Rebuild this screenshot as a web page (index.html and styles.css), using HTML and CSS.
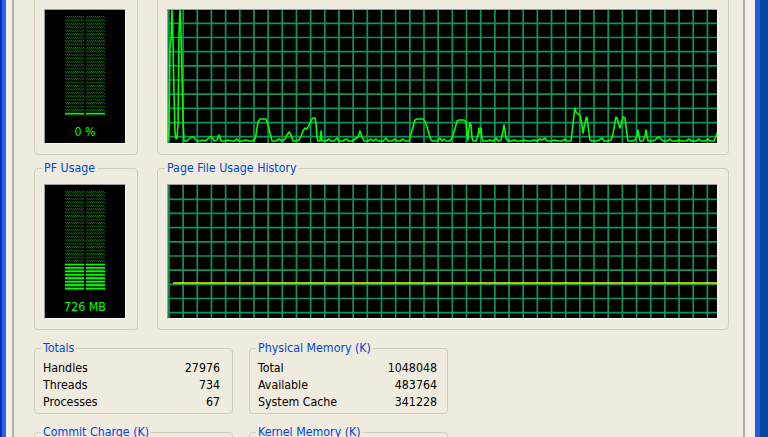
FILE: index.html
```html
<!DOCTYPE html>
<html lang="en">
<head>
<meta charset="utf-8">
<title>Windows Task Manager - Performance</title>
<link rel="stylesheet" href="styles.css">
</head>
<body>
<div class="window">
  <div class="window-inner">
    <div class="tabbody">
      <div class="page">

        <div class="row row-graphs">
          <fieldset class="group group-meter">
            <legend>CPU Usage</legend>
            <div class="meter">
              <svg class="bars" width="40" height="100" viewBox="0 0 40 100">
                <defs>
                  <pattern id="dotsCpu" width="2" height="3.45" patternUnits="userSpaceOnUse">
                    <rect x="0" y="0" width="1" height="1" fill="#0a800a"/>
                    <rect x="1" y="1" width="1" height="1" fill="#0a800a"/>
                  </pattern>
                  <pattern id="litCpu" width="40" height="3.45" patternUnits="userSpaceOnUse">
                    <rect width="40" height="2" fill="#00ff00"/>
                  </pattern>
                </defs>
                <rect width="40" height="100" fill="url(#dotsCpu)"/>
                <rect y="96.6" width="40" height="3.4" fill="#000"/>
                <rect y="96.6" width="40" height="3.4" fill="url(#litCpu)"/>
                <rect x="19" width="2" height="100" fill="#000"/>
              </svg>
              <div class="meter-value">0 %</div>
            </div>
          </fieldset>
          <fieldset class="group group-history">
            <legend>CPU Usage History</legend>
            <div class="graph">
              <svg class="trace" width="549" height="133" viewBox="168 10 549 133">
                <path class="grid" d="M168.94 0V460M183.11 0V460M197.28 0V460M211.45 0V460M225.62 0V460M239.79 0V460M253.96 0V460M268.13 0V460M282.3 0V460M296.47 0V460M310.64 0V460M324.81 0V460M338.98 0V460M353.15 0V460M367.32 0V460M381.49 0V460M395.66 0V460M409.83 0V460M424 0V460M438.17 0V460M452.34 0V460M466.51 0V460M480.68 0V460M494.85 0V460M509.02 0V460M523.19 0V460M537.36 0V460M551.53 0V460M565.7 0V460M579.87 0V460M594.04 0V460M608.21 0V460M622.38 0V460M636.55 0V460M650.72 0V460M664.89 0V460M679.06 0V460M693.23 0V460M707.4 0V460"/>
                <path class="grid" d="M160 23.34H730M160 37.51H730M160 51.68H730M160 65.85H730M160 80.02H730M160 94.19H730M160 108.36H730M160 122.53H730M160 136.7H730"/>
                <polyline class="cpu-line" points="168,141 169,128 170,46 171,40 172,10 173,40 174,95 175,132 176,139 177,138 178,125 179,34 180,10 181,33 182,75 183,118 184,141 187,141 189,139 191,137 193,137 195,139 197,141 200,141 203,140 205,141 208,139 210,137 212,137 214,141 217,140 219,135 221,141 225,141 228,140 231,141 234,141 237,139 239,141 243,141 246,140 249,141 252,141 255,139 256,135 257,128 258,122 260,119 263,119 266,119 267,121 268,124 270,133 272,141 276,141 279,139 282,141 285,139 287,135 289,132 291,135 293,141 296,141 299,140 301,136 303,131 305,128 307,129 309,125 311,121 313,118 315,118 316,124 317,137 318,141 320,141 321,131 322,141 326,141 329,139 331,141 334,141 337,138 339,141 343,141 346,139 349,141 352,141 355,139 358,137 360,131 362,137 364,141 368,141 371,139 373,141 376,139 378,141 383,141 386,138 388,141 392,141 395,139 397,141 400,141 403,139 405,141 409,141 411,134 413,127 415,120 417,119 423,119 425,121 427,127 429,134 431,140 433,141 437,141 440,138 442,141 444,139 446,141 450,141 452,138 454,132 456,125 457,121 459,120 464,120 466,122 467,135 468,140 469,128 470,123 471,125 472,138 473,141 476,141 478,135 479,128 480,133 481,128 482,138 483,141 487,141 490,140 493,141 496,138 498,141 501,140 503,131 504,125 505,131 506,138 508,141 511,141 514,140 517,141 521,141 524,140 527,141 531,141 534,140 537,141 540,139 542,140 545,138 547,141 551,141 555,140 558,141 562,141 565,139 567,141 571,141 573,124 574,115 575,108 576,112 578,114 580,115 582,125 583,133 584,128 585,124 586,118 587,117 588,125 589,133 590,140 592,141 596,141 599,140 602,138 604,141 608,141 611,140 613,134 615,122 616,117 617,118 619,125 620,128 621,125 623,117 625,118 626,126 627,134 628,141 632,141 635,140 637,136 638,130 639,136 640,141 643,141 645,136 646,130 647,136 648,141 652,141 655,140 657,138 659,137 661,139 663,141 667,141 670,139 672,141 676,141 679,140 682,141 686,141 689,139 692,141 696,141 699,139 701,141 705,141 708,139 710,141 714,141 716,136 717,133 718,137"/>
              </svg>
            </div>
          </fieldset>
        </div>

        <div class="row row-graphs row-second">
          <fieldset class="group group-meter">
            <legend>PF Usage</legend>
            <div class="meter">
              <svg class="bars" width="40" height="100" viewBox="0 0 40 100">
                <defs>
                  <pattern id="dotsPf" width="2" height="3.45" patternUnits="userSpaceOnUse">
                    <rect x="0" y="0" width="1" height="1" fill="#0a800a"/>
                    <rect x="1" y="1" width="1" height="1" fill="#0a800a"/>
                  </pattern>
                  <pattern id="litPf" width="40" height="3.45" patternUnits="userSpaceOnUse">
                    <rect width="40" height="2" fill="#00ff00"/>
                  </pattern>
                </defs>
                <rect width="40" height="100" fill="url(#dotsPf)"/>
                <rect y="72.45" width="40" height="27.55" fill="#000"/>
                <rect y="72.45" width="40" height="27.55" fill="url(#litPf)"/>
                <rect x="19" width="2" height="100" fill="#000"/>
              </svg>
              <div class="meter-value">726 MB</div>
            </div>
          </fieldset>
          <fieldset class="group group-history">
            <legend>Page File Usage History</legend>
            <div class="graph">
              <svg class="trace" width="549" height="133" viewBox="168 185 549 133">
                <path class="grid" d="M168.94 0V460M183.11 0V460M197.28 0V460M211.45 0V460M225.62 0V460M239.79 0V460M253.96 0V460M268.13 0V460M282.3 0V460M296.47 0V460M310.64 0V460M324.81 0V460M338.98 0V460M353.15 0V460M367.32 0V460M381.49 0V460M395.66 0V460M409.83 0V460M424 0V460M438.17 0V460M452.34 0V460M466.51 0V460M480.68 0V460M494.85 0V460M509.02 0V460M523.19 0V460M537.36 0V460M551.53 0V460M565.7 0V460M579.87 0V460M594.04 0V460M608.21 0V460M622.38 0V460M636.55 0V460M650.72 0V460M664.89 0V460M679.06 0V460M693.23 0V460M707.4 0V460"/>
                <path class="grid" d="M160 199.3H730M160 213.47H730M160 227.64H730M160 241.81H730M160 255.98H730M160 270.15H730M160 284.32H730M160 298.49H730M160 312.66H730"/>
                <line x1="173" y1="283" x2="717" y2="283" stroke="#f2f200" stroke-width="1.7"/>
              </svg>
            </div>
          </fieldset>
        </div>

        <div class="row row-stats">
          <fieldset class="group group-stats group-left">
            <legend>Totals</legend>
            <div class="stat"><span>Handles</span><span>27976</span></div>
            <div class="stat"><span>Threads</span><span>734</span></div>
            <div class="stat"><span>Processes</span><span>67</span></div>
          </fieldset>
          <fieldset class="group group-stats group-right">
            <legend>Physical Memory (K)</legend>
            <div class="stat"><span>Total</span><span>1048048</span></div>
            <div class="stat"><span>Available</span><span>483764</span></div>
            <div class="stat"><span>System Cache</span><span>341228</span></div>
          </fieldset>
        </div>

        <div class="row row-stats row-last">
          <fieldset class="group group-stats group-left">
            <legend>Commit Charge (K)</legend>
            <div class="stat"><span>Total</span><span>752412</span></div>
            <div class="stat"><span>Limit</span><span>2521344</span></div>
            <div class="stat"><span>Peak</span><span>811236</span></div>
          </fieldset>
          <fieldset class="group group-stats group-right">
            <legend>Kernel Memory (K)</legend>
            <div class="stat"><span>Total</span><span>98412</span></div>
            <div class="stat"><span>Paged</span><span>71220</span></div>
            <div class="stat"><span>Nonpaged</span><span>27192</span></div>
          </fieldset>
        </div>

      </div>
    </div>
  </div>
</div>
</body>
</html>
```

FILE: styles.css
```css
html, body {
  margin: 0;
  padding: 0;
  background: #0a48a6;
}

body {
  font-family: Tahoma, "DejaVu Sans Condensed", "Liberation Sans", sans-serif;
  font-size: 12.3px;
  color: #000;
}

.window {
  height: 437px;
  overflow: hidden;
  box-sizing: border-box;
  border-left: 2px solid #0a31a4;
  border-right: 8px solid #0a48a6;
}

.window-inner {
  height: 100%;
  box-sizing: border-box;
  border-left: 4px solid #2563ee;
  border-right: 5px solid #1f5cde;
  background: #f3f1e7;
  padding: 0 10px 0 6px;
}

.tabbody {
  height: 100%;
  box-sizing: border-box;
  display: flow-root;
  border-left: 2px solid #a9aeae;
  border-right: 2px solid #a9aeae;
  background: #efebdf;
}

.page {
  margin-top: -15px;
  padding: 0 14px 0 20px;
  display: flex;
  flex-direction: column;
}

.row {
  display: flex;
  gap: 19px;
}

.row-second {
  margin-top: 5px;
}

.row-stats {
  gap: 16px;
  margin-top: 10px;
}

.row-last {
  margin-top: 10px;
}

.group {
  margin: 0;
  min-width: 0;
  box-sizing: border-box;
  border: 1px solid #d0ccbc;
  border-radius: 4px;
}

.group legend {
  padding: 0 2px;
  margin-left: -2px;
  height: 16px;
  line-height: 16px;
  color: #0046d5;
  white-space: nowrap;
}

.group-meter {
  width: 104px;
  padding: 8px 11px 10px 9px;
}

.group-history {
  width: 572px;
  padding: 8px 10px 10px 9px;
}

.meter {
  height: 135px;
  box-sizing: border-box;
  background: #000;
  border: 1px solid;
  border-color: #9d9d94 #fbfbf8 #fbfbf8 #9d9d94;
  display: flex;
  flex-direction: column;
  align-items: center;
  padding-top: 6px;
}

.bars {
  display: block;
}

.meter-value {
  margin-top: 9px;
  line-height: 14px;
  color: #00ff00;
  white-space: nowrap;
}

.graph {
  height: 135px;
  box-sizing: border-box;
  border: 1px solid;
  border-color: #9d9d94 #fbfbf8 #fbfbf8 #9d9d94;
  background-color: #000;
}

.trace {
  display: block;
}

.grid {
  fill: none;
  stroke: #109457;
  stroke-width: 1.7;
}

.cpu-line {
  fill: none;
  stroke: #00ff00;
  stroke-width: 1.6;
  stroke-linejoin: round;
}

.group-stats {
  width: 199px;
  padding: 3.5px 12px 2px 8px;
}

.group-right {
  padding-right: 10px;
}

.stat {
  display: flex;
  justify-content: space-between;
  line-height: 17.3px;
  white-space: nowrap;
}
```
